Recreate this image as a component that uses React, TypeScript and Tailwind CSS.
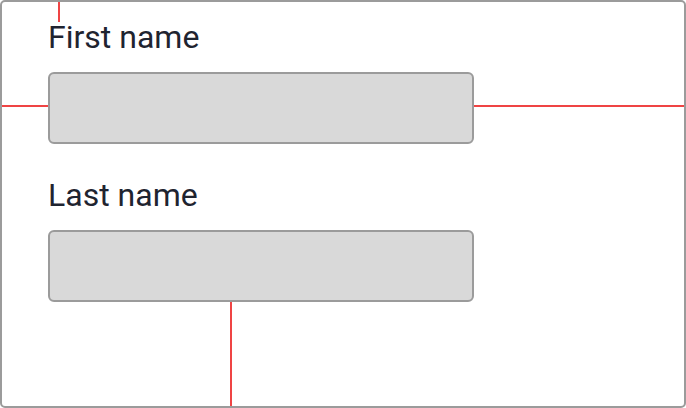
const FIELDS = ["First name", "Last name"];

export default function App() {
  return (
    <div
      className="relative w-[686px] h-[408px] bg-white border-2 border-[#9b9b9b] rounded-[5px] overflow-hidden"
      style={{ fontFamily: "Roboto, 'Noto Sans', sans-serif" }}
    >
      <div className="flex flex-col gap-[35px] pt-[19px] pl-[46px]">
        {FIELDS.map((label) => (
          <label key={label} className="flex flex-col gap-[19px]">
            <span className="text-[32px] leading-none text-[#1f2430]">{label}</span>
            <input
              type="text"
              className="w-[426px] h-[72px] bg-[#d9d9d9] border-2 border-[#9b9b9b] rounded-md outline-none"
            />
          </label>
        ))}
      </div>

      {/* spacing guides */}
      <div className="absolute left-[56px] top-0 w-[2px] h-[20px] bg-[#ef4444]" />
      <div className="absolute left-0 top-[103px] w-[46px] h-[2px] bg-[#ef4444]" />
      <div className="absolute left-[472px] top-[103px] right-0 h-[2px] bg-[#ef4444]" />
      <div className="absolute left-[228px] top-[300px] bottom-0 w-[2px] bg-[#ef4444]" />
    </div>
  );
}
